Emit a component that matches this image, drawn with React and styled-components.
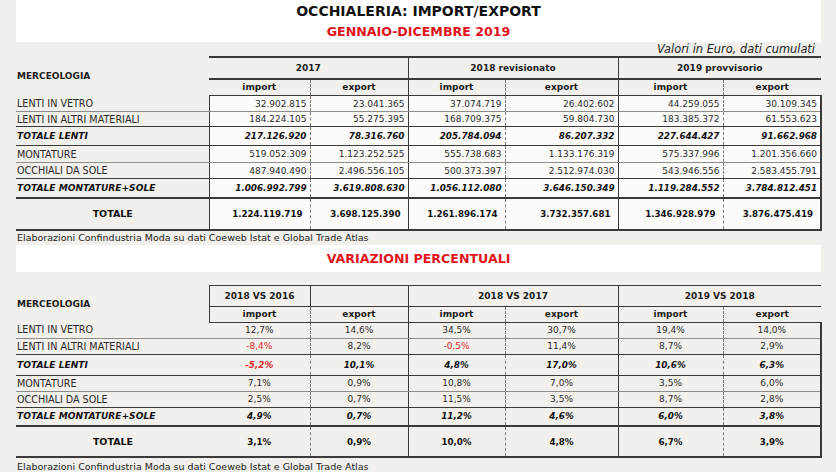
import styled, { createGlobalStyle } from 'styled-components'

const GlobalStyle = createGlobalStyle`
  body {
    margin: 0;
    background: #f2f0ec;
  }
`

const Page = styled.div`
  width: 836px;
  height: 472px;
  overflow: hidden;
  display: flex;
  flex-direction: column;
  font-family: 'DejaVu Sans', Verdana, sans-serif;
  color: #1c1c1c;
`

const Band = styled.div`
  margin-left: 16px;
  width: 805px;
  height: ${p => p.$h}px;
  padding-top: ${p => p.$pt || 0}px;
  box-sizing: border-box;
  background: #fff;
  display: flex;
  flex-direction: column;
  align-items: center;
  justify-content: ${p => (p.$pt ? 'flex-start' : 'center')};
`

const Title = styled.h1`
  margin: 0;
  font-size: 14px;
  line-height: 17px;
  font-weight: bold;
  color: #111;
`

const Subtitle = styled.h2`
  margin: ${p => p.$mt || 0}px 0 0;
  font-size: 12.6px;
  line-height: 15px;
  font-weight: bold;
  color: #e3121b;
`

const Note = styled.div`
  width: 821px;
  height: 14px;
  box-sizing: border-box;
  padding-right: 6px;
  text-align: right;
  font-size: 11.4px;
  line-height: 14px;
  font-style: italic;
  color: #222;
`

const Source = styled.div`
  height: ${p => p.$h || 14}px;
  padding: ${p => p.$pt || 0}px 0 0 17px;
  box-sizing: border-box;
  font-size: 9.5px;
  line-height: 14px;
  color: #222;
`

const Spacer = styled.div`
  height: ${p => p.$h}px;
  flex: none;
`

const Sheet = styled.table`
  margin-left: 16px;
  width: 805px;
  table-layout: fixed;
  border-collapse: collapse;
  font-size: 9px;
  flex: none;
`

const LINES = {
  thin: '1px solid #8c8c8c',
  dark: '1px solid #3a3a3a',
  thick: '2px solid #3a3a3a',
  none: 'none',
}

const EDGES = {
  solid: '1px solid #3a3a3a',
  dash: '1px dashed #7a7a7a',
  none: 'none',
}

const LABEL_SIZE = { plain: 9.6, sub: 9.1, grand: 9.5 }
const VALUE_SIZE = { plain: 9, sub: 8.8, grand: 8.7 }

const Row = styled.tr`
  height: ${p => p.$h}px;
`

const Label = styled.td`
  padding: 0 0 0 1px;
  white-space: nowrap;
  overflow: hidden;
  color: ${p => (p.$kind === 'plain' ? '#2a2a2a' : '#111')};
  text-align: ${p => (p.$kind === 'grand' ? 'center' : 'left')};
  font-weight: ${p => (p.$kind === 'plain' ? 'normal' : 'bold')};
  font-style: ${p => (p.$kind === 'sub' ? 'italic' : 'normal')};
  font-size: ${p => LABEL_SIZE[p.$kind]}px;
  border-bottom: ${p => LINES[p.$line]};
`

const HeadLabel = styled.th`
  padding: 0 0 0 1px;
  text-align: left;
  font-size: 9px;
  font-weight: bold;
`

const Head = styled.th`
  padding: 0;
  text-align: center;
  font-size: 9px;
  font-weight: bold;
  border-top: ${p => LINES[p.$top || 'none']};
  border-bottom: ${p => LINES[p.$bottom || 'none']};
  border-left: ${p => EDGES[p.$edge || 'none']};
  border-right: ${p => EDGES[p.$right || 'none']};
`

const Value = styled.td`
  padding: 0 ${p => (p.$align === 'right' ? (p.$kind === 'grand' ? 7 : 3) : 0)}px 0 0;
  text-align: ${p => p.$align};
  white-space: nowrap;
  background: ${p => p.$bg || 'transparent'};
  color: ${p => (p.$neg ? '#e2262f' : p.$kind === 'plain' ? '#2a2a2a' : '#111')};
  font-weight: ${p => (p.$kind === 'plain' ? 'normal' : 'bold')};
  font-style: ${p => (p.$kind === 'sub' ? 'italic' : 'normal')};
  font-size: ${p => VALUE_SIZE[p.$kind]}px;
  border-bottom: ${p => LINES[p.$line]};
  border-top: ${p => LINES[p.$top || 'none']};
  border-left: ${p => EDGES[p.$edge]};
  border-right: ${p => (p.$last ? '2px solid #3a3a3a' : 'none')};
`

const COLS = [193, 101, 98, 97, 113, 105, 98]

function Cols() {
  return (
    <colgroup>
      {COLS.map((w, i) => (
        <col key={i} style={{ width: w }} />
      ))}
    </colgroup>
  )
}

const VALUES = [
  { label: 'LENTI IN VETRO', kind: 'plain', h: 16, line: 'thin', v: ['32.902.815', '23.041.365', '37.074.719', '26.402.602', '44.259.055', '30.109.345'] },
  { label: 'LENTI IN ALTRI MATERIALI', kind: 'plain', h: 15, line: 'dark', v: ['184.224.105', '55.275.395', '168.709.375', '59.804.730', '183.385.372', '61.553.623'] },
  { label: 'TOTALE LENTI', kind: 'sub', h: 19, line: 'dark', v: ['217.126.920', '78.316.760', '205.784.094', '86.207.332', '227.644.427', '91.662.968'] },
  { label: 'MONTATURE', kind: 'plain', h: 17, line: 'thin', v: ['519.052.309', '1.123.252.525', '555.738.683', '1.133.176.319', '575.337.996', '1.201.356.660'] },
  { label: 'OCCHIALI DA SOLE', kind: 'plain', h: 16, line: 'dark', v: ['487.940.490', '2.496.556.105', '500.373.397', '2.512.974.030', '543.946.556', '2.583.455.791'] },
  { label: 'TOTALE MONTATURE+SOLE', kind: 'sub', h: 19, line: 'thick', v: ['1.006.992.799', '3.619.808.630', '1.056.112.080', '3.646.150.349', '1.119.284.552', '3.784.812.451'] },
  { label: 'TOTALE', kind: 'grand', h: 32, line: 'thick', v: ['1.224.119.719', '3.698.125.390', '1.261.896.174', '3.732.357.681', '1.346.928.979', '3.876.475.419'] },
]

const CHANGES = [
  { label: 'LENTI IN VETRO', kind: 'plain', h: 16, line: 'thin', v: ['12,7%', '14,6%', '34,5%', '30,7%', '19,4%', '14,0%'] },
  { label: 'LENTI IN ALTRI MATERIALI', kind: 'plain', h: 16, line: 'dark', v: ['-8,4%', '8,2%', '-0,5%', '11,4%', '8,7%', '2,9%'] },
  { label: 'TOTALE LENTI', kind: 'sub', h: 21, line: 'dark', v: ['-5,2%', '10,1%', '4,8%', '17,0%', '10,6%', '6,3%'] },
  { label: 'MONTATURE', kind: 'plain', h: 16, line: 'thin', v: ['7,1%', '0,9%', '10,8%', '7,0%', '3,5%', '6,0%'] },
  { label: 'OCCHIALI DA SOLE', kind: 'plain', h: 16, line: 'dark', v: ['2,5%', '0,7%', '11,5%', '3,5%', '8,7%', '2,8%'] },
  { label: 'TOTALE MONTATURE+SOLE', kind: 'sub', h: 19, line: 'thick', v: ['4,9%', '0,7%', '11,2%', '4,6%', '6,0%', '3,8%'] },
  { label: 'TOTALE', kind: 'grand', h: 31, line: 'thick', v: ['3,1%', '0,9%', '10,0%', '4,8%', '6,7%', '3,9%'] },
]

const EDGES_VALUES = ['solid', 'dash', 'solid', 'dash', 'solid', 'dash']
const EDGES_CHANGES = ['none', 'dash', 'solid', 'dash', 'solid', 'dash']
const SUB = ['import', 'export', 'import', 'export', 'import', 'export']

function ValuesTable() {
  return (
    <Sheet>
      <Cols />
      <thead>
        <Row $h={22}>
          <HeadLabel rowSpan={2}>MERCEOLOGIA</HeadLabel>
          <Head colSpan={2} $top="thick" $bottom="thick">2017</Head>
          <Head colSpan={2} $top="thick" $bottom="thick" $edge="solid">2018 revisionato</Head>
          <Head colSpan={2} $top="thick" $bottom="thick" $edge="solid">2019 provvisorio</Head>
        </Row>
        <Row $h={17}>
          {SUB.map((s, i) => (
            <Head key={i} $edge={i === 0 ? 'none' : EDGES_VALUES[i]}>{s}</Head>
          ))}
        </Row>
      </thead>
      <tbody>
        {VALUES.map((r, ri) => (
          <Row key={r.label} $h={r.h}>
            <Label $kind={r.kind} $line={r.line}>{r.label}</Label>
            {r.v.map((v, i) => (
              <Value
                key={i}
                $align="right"
                $kind={r.kind}
                $line={r.line}
                $top={ri === 0 ? 'dark' : 'none'}
                $edge={EDGES_VALUES[i]}
                $last={i === 5}
                $bg="#fcfbfa"
              >
                {v}
              </Value>
            ))}
          </Row>
        ))}
      </tbody>
    </Sheet>
  )
}

function ChangesTable() {
  return (
    <Sheet>
      <Cols />
      <thead>
        <Row $h={21}>
          <HeadLabel rowSpan={2}>MERCEOLOGIA</HeadLabel>
          <Head $top="dark" $bottom="dark" $edge="solid" $right="solid">2018 VS 2016</Head>
          <Head $top="dark" $bottom="dark" />
          <Head colSpan={2} $top="dark" $bottom="dark" $edge="solid">2018 VS 2017</Head>
          <Head colSpan={2} $top="dark" $bottom="dark" $edge="solid">2019 VS 2018</Head>
        </Row>
        <Row $h={16}>
          {SUB.map((s, i) => (
            <Head key={i} $bottom="dark" $edge={i === 0 ? 'solid' : EDGES_CHANGES[i]}>{s}</Head>
          ))}
        </Row>
      </thead>
      <tbody>
        {CHANGES.map(r => (
          <Row key={r.label} $h={r.h}>
            <Label $kind={r.kind} $line={r.line}>{r.label}</Label>
            {r.v.map((v, i) => (
              <Value
                key={i}
                $align="center"
                $kind={r.kind}
                $line={r.line}
                $edge={EDGES_CHANGES[i]}
                $last={i === 5}
                $neg={v.startsWith('-')}
              >
                {v}
              </Value>
            ))}
          </Row>
        ))}
      </tbody>
    </Sheet>
  )
}

export default function App() {
  return (
    <>
      <GlobalStyle />
      <Page>
        <Band $h={43} $pt={3}>
          <Title>OCCHIALERIA: IMPORT/EXPORT</Title>
          <Subtitle $mt={4}>GENNAIO-DICEMBRE 2019</Subtitle>
        </Band>
        <Note>Valori in Euro, dati cumulati</Note>
        <ValuesTable />
        <Source>Elaborazioni Confindustria Moda su dati Coeweb Istat e Global Trade Atlas</Source>
        <Band $h={28}>
          <Subtitle>VARIAZIONI PERCENTUALI</Subtitle>
        </Band>
        <Spacer $h={13} />
        <ChangesTable />
        <Source $pt={2}>Elaborazioni Confindustria Moda su dati Coeweb Istat e Global Trade Atlas</Source>
      </Page>
    </>
  )
}
